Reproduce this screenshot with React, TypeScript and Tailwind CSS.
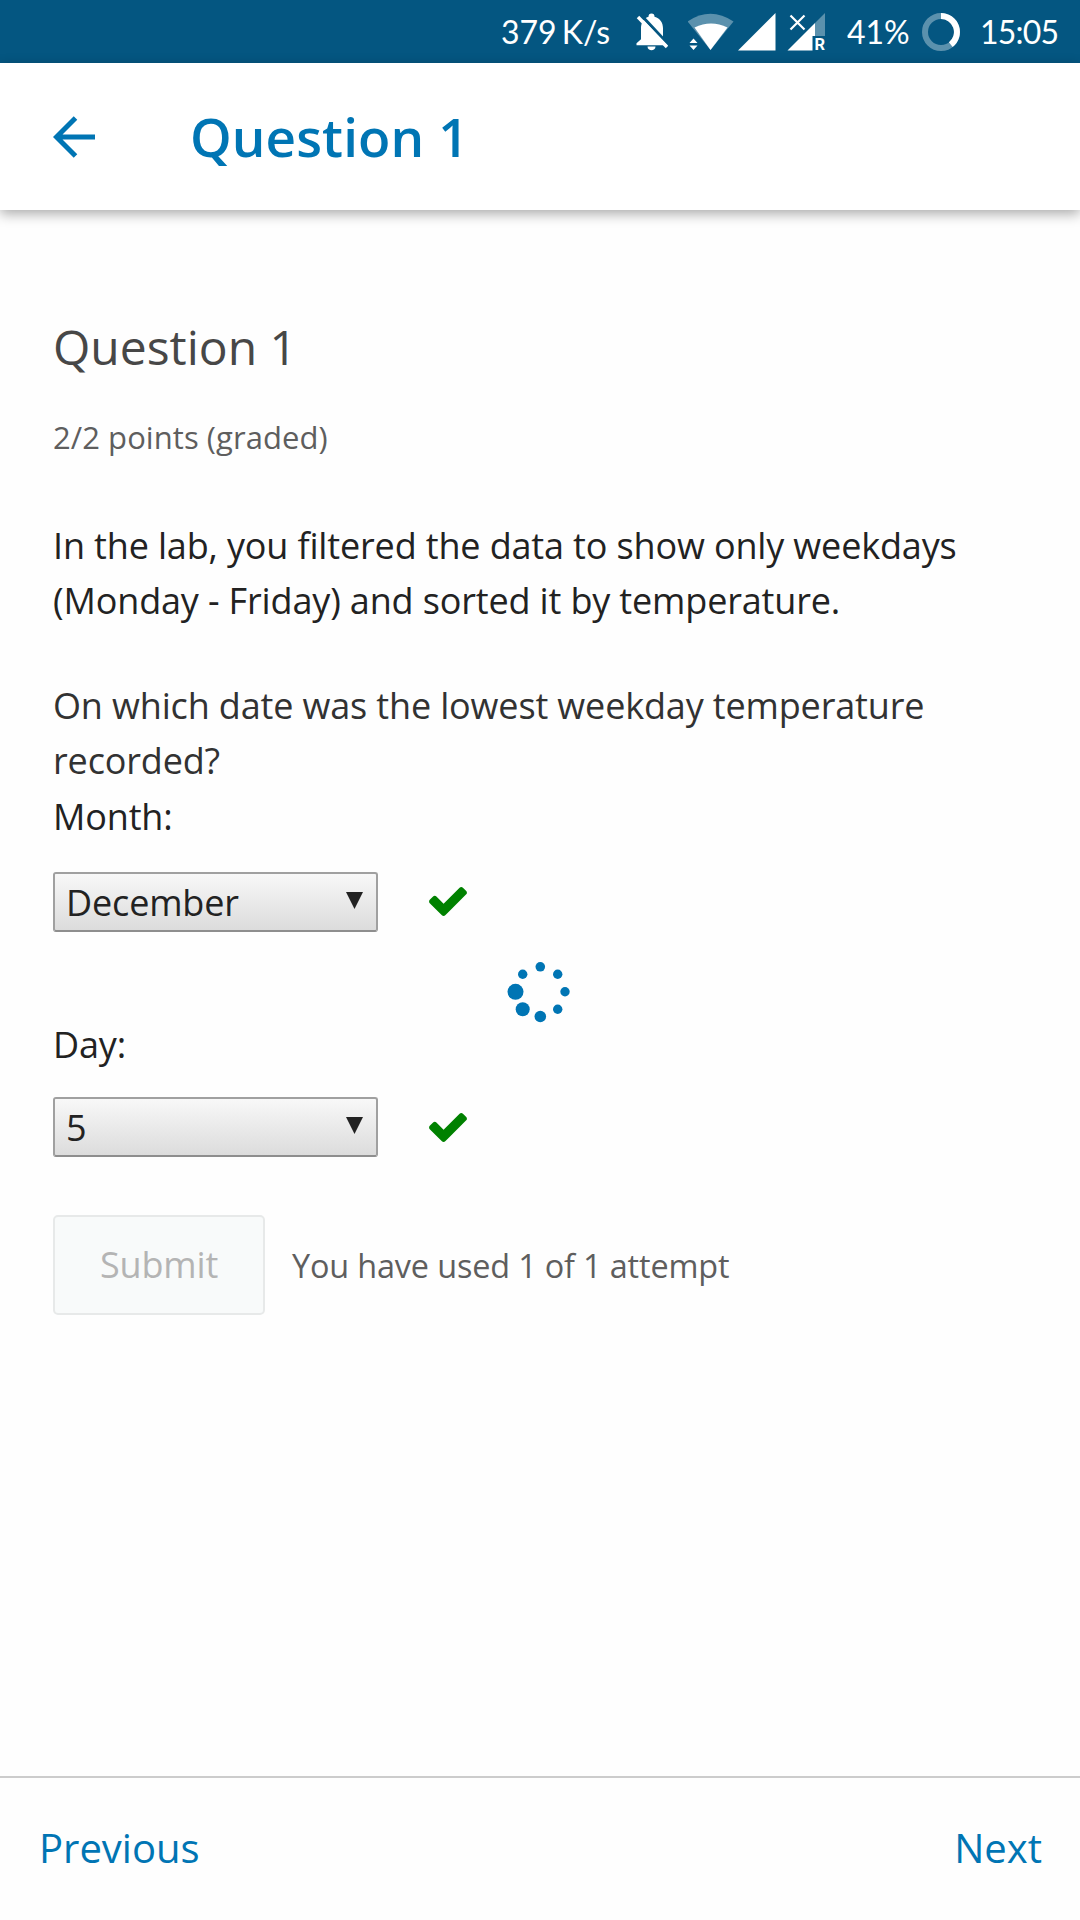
import React from "react";

function Check({ className = "" }: { className?: string }) {
  return (
    <svg width="38" height="29" viewBox="121 334 1550 1188" className={`shrink-0 ${className}`} fill="#008100">
      <path d="M1671 566q0 40-28 68l-724 724-136 136q-28 28-68 28t-68-28l-136-136-362-362q-28-28-28-68t28-68l136-136q28-28 68-28t68 28l294 295 656-657q28-28 68-28t68 28l136 136q28 28 28 68z" />
    </svg>
  );
}

function SelectBox({ value }: { value: string }) {
  return (
    <div className="flex h-[60px] w-[325px] items-center justify-between rounded-[3px] border-2 border-[#a0a0a0] border-b-[#8e8e8e] bg-linear-to-b from-[#f8f8f8] to-[#dcdcdc] pr-[13px] pl-[11px] text-[#222]">
      <span className="text-[36px] leading-[55px]">{value}</span>
      <svg width="17" height="17" viewBox="0 0 17 17" className="mb-[4px]" fill="#222">
        <path d="M0 0h17L8.500 17z" />
      </svg>
    </div>
  );
}

function Bell() {
  return (
    <svg width="32" height="38" viewBox="636 13 32 38" fill="none">
      <path d="M651.500 13.500c2 0 3 1.200 3 3.200c6 1.500 8.500 6.500 8.500 11.500v11l4 4v2h-30.500v-2l4.500-4v-11c0-5 2-9.500 7.500-11.500c0-2 1-3.200 3-3.200zM647.500 46.500h8c0 5-8 5-8 0z" fill="#fff" />
      <path d="M641 15l28 30" stroke="#045681" strokeWidth="3" />
      <path d="M638 17l29 30" stroke="#fff" strokeWidth="3.400" />
    </svg>
  );
}

function Wifi() {
  return (
    <svg width="46" height="38" viewBox="688 13 46 38" fill="none">
      <path d="M687.500 21.500Q710.500 6 733.500 21.500L710.500 50z" fill="#fff" fillOpacity=".35" />
      <path d="M694.500 27.500Q711 19.500 727.500 27.500L710.500 50z" fill="#fff" />
      <path d="M689.500 43l4-4.500 4 4.500zM689.500 45.500l4 4.500 4-4.500z" fill="#fff" />
    </svg>
  );
}

function Signals() {
  return (
    <svg width="91" height="38" viewBox="738 13 91 38" fill="none" className="overflow-visible">
      <path d="M775.500 13v37.500h-37.500z" fill="#fff" />
      <path d="M825 13v23h-10v-13z" fill="#fff" fillOpacity=".35" />
      <path d="M815 23v13h-2.500v14.500h-25z" fill="#fff" />
      <path d="M790.500 15.500l14 14M804.500 15.500l-14 14" stroke="#fff" strokeWidth="2.200" />
      <text x="814.500" y="50" fill="#fff" fontSize="16.500" fontWeight="700" fontFamily="Roboto, sans-serif">R</text>
    </svg>
  );
}

function BatteryRing() {
  return (
    <svg width="38" height="38" viewBox="0 0 38 38" fill="none">
      <circle cx="19" cy="19" r="16" stroke="#fff" strokeOpacity=".35" strokeWidth="6" />
      <path d="M19 3A16 16 0 0 1 28.800 31.600" stroke="#fff" strokeWidth="6" />
    </svg>
  );
}

const dots = [
  [540.3, 966.8, 4.8],
  [557.7, 974.2, 4.7],
  [565, 991.8, 4.7],
  [557.7, 1009.2, 4.7],
  [540.3, 1016.5, 5.8],
  [522.7, 1009.2, 7],
  [515.5, 991.8, 8],
  [522.7, 974.2, 4.7],
];

function Spinner() {
  return (
    <svg className="absolute top-[960px] left-[506px]" width="66" height="66" viewBox="506 960 66 66" fill="#0075b4">
      {dots.map(([x, y, r]) => (
        <circle key={`${x}-${y}`} cx={x} cy={y} r={r} />
      ))}
    </svg>
  );
}

export default function App() {
  return (
    <div className="relative flex h-[1920px] w-[1080px] flex-col overflow-hidden bg-[#fefefe] font-['Open_Sans',sans-serif]">
      <div className="flex h-[63px] shrink-0 items-center bg-[#045681] pl-[501px] font-[Lato,sans-serif] text-[32px] whitespace-nowrap text-white">
        <span className="w-[135px] [word-spacing:-3px]">379 K/s</span>
        <Bell />
        <span className="w-[20px]" />
        <Wifi />
        <span className="w-[4px]" />
        <Signals />
        <span className="ml-[18px] w-[75px]">41%</span>
        <BatteryRing />
        <span className="ml-[20px] tracking-[-0.8px]">15:05</span>
      </div>
      <header className="flex h-[147px] shrink-0 items-center bg-white pl-[53px] shadow-[0_4px_12px_rgba(0,0,0,0.33)]">
        <svg width="42" height="42" viewBox="0 0 42 42" fill="none" stroke="#0075b4" strokeWidth="5">
          <path d="M22.500 2L3.500 21l19 19M3 21h39" />
        </svg>
        <h1 className="ml-[95px] text-[53px] leading-[72px] font-semibold tracking-[0.1px] text-[#0075b4]">Question 1</h1>
      </header>
      <main className="flex flex-1 flex-col pt-[107px] pl-[53px] text-[36px] leading-[55px] tracking-[-0.15px] text-[#222]">
        <h2 className="text-[48px] leading-[60px] tracking-normal text-[#474747]">Question 1</h2>
        <p className="mt-[40px] text-[31px] leading-[40px] tracking-[0.06px] text-[#5e5e5e]">2/2 points (graded)</p>
        <p className="mt-[61px]">In the lab, you filtered the data to show only weekdays<br />(Monday - Friday) and sorted it by temperature.</p>
        <p className="mt-[50px] text-[#323232]">On which date was the lowest weekday temperature<br />recorded?</p>
        <p className="mt-[1px]">Month:</p>
        <div className="mt-[28px] flex h-[60px] items-center gap-[51px]"><SelectBox value="December" /><Check className="mb-[2px]" /></div>
        <p className="mt-[85px]">Day:</p>
        <div className="mt-[25px] flex h-[60px] items-center gap-[51px]"><SelectBox value="5" /><Check /></div>
        <div className="mt-[58px] flex items-center">
          <button className="h-[100px] w-[212px] rounded-[5px] border-2 border-[#e7e9e9] bg-[#f8fafa] pb-[2px] text-[#b4b4b4]">Submit</button>
          <span className="ml-[27px] text-[32.4px] text-[#5e5e5e]">You have used 1 of 1 attempt</span>
        </div>
      </main>
      <footer className="flex h-[144px] shrink-0 items-center justify-between border-t-2 border-[#ccc] pr-[38px] pb-[2px] pl-[39px] text-[40px] text-[#0075b4]">
        <span>Previous</span>
        <span>Next</span>
      </footer>
      <Spinner />
    </div>
  );
}
